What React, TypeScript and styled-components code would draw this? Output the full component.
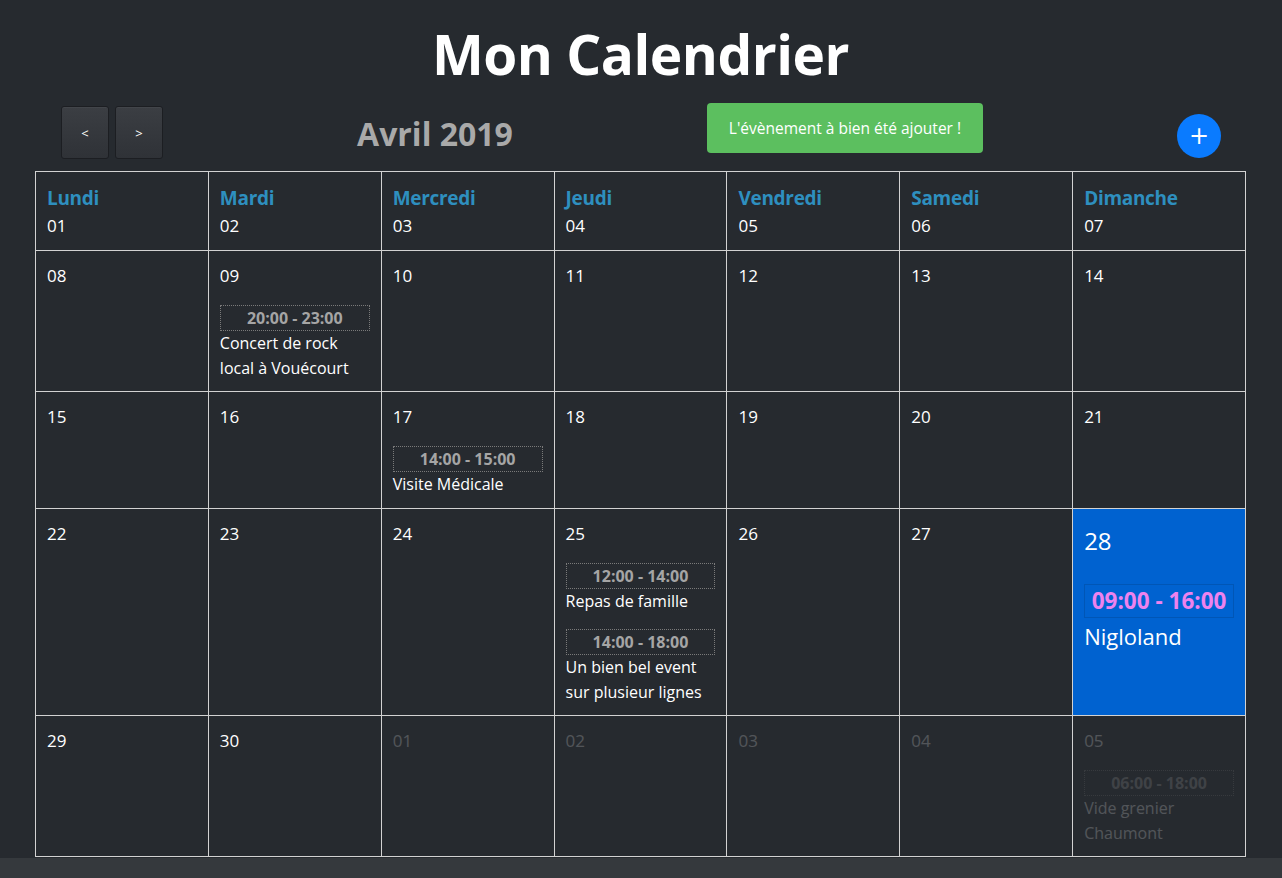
import React from "react";
import styled, { createGlobalStyle } from "styled-components";

const GlobalStyle = createGlobalStyle`
  html, body { margin: 0; padding: 0; }
  body {
    background: #35393d;
    font-family: "Open Sans", "Noto Sans", sans-serif;
    color: #fff;
  }
`;

const Page = styled.div`
  background: #262a2f;
  padding: 20px 36px 1px 35px;
`;

const Title = styled.h1`
  margin: 0 0 16px;
  text-align: center;
  font-size: 55px;
  line-height: 67px;
  font-weight: 700;
  color: #fff;
  letter-spacing: -0.5px;
`;

const Toolbar = styled.div`
  display: flex;
  justify-content: space-between;
  align-items: flex-start;
  padding: 0 25px 0 26px;
  height: 55px;
  margin-bottom: 13px;
`;

const NavGroup = styled.div`
  display: flex;
  gap: 6px;
  margin-top: 3px;
`;

const NavButton = styled.button`
  width: 48px;
  height: 53px;
  border: 1px solid #1c1e22;
  border-radius: 3px;
  background: linear-gradient(#3b3e43, #2f3237);
  color: #fff;
  font-family: "Open Sans", sans-serif;
  font-size: 13px;
  padding: 0;
  box-shadow: inset 0 1px 0 rgba(255, 255, 255, 0.04);
`;

const Month = styled.h2`
  margin: 9px 0 0;
  font-size: 32px;
  line-height: 44px;
  font-weight: 700;
  color: #a9a9a9;
`;

const Alert = styled.div`
  width: 276px;
  height: 50px;
  box-sizing: border-box;
  background: #5cbf5f;
  border-radius: 4px;
  color: #fff;
  font-size: 15.5px;
  display: flex;
  align-items: center;
  justify-content: center;
`;

const AddButton = styled.button`
  margin-top: 11px;
  width: 44px;
  height: 44px;
  border-radius: 50%;
  border: none;
  background: #0a7bff;
  color: #fff;
  font-size: 24px;
  line-height: 1;
  padding: 0;
  display: flex;
  align-items: center;
  justify-content: center;
  font-family: "DejaVu Sans", sans-serif;
`;

const Grid = styled.div`
  display: grid;
  grid-template-columns: repeat(7, 1fr);
  border-top: 1px solid #d2d2d2;
  border-left: 1px solid #d2d2d2;
`;

const Cell = styled.div<{ $today?: boolean; $faded?: boolean }>`
  border-right: 1px solid #d2d2d2;
  border-bottom: 1px solid #d2d2d2;
  padding: 11px 11px 11px;
  background: ${(p) => (p.$today ? "#0062d0" : "transparent")};
  min-width: 0;
  & > * {
    opacity: ${(p) => (p.$faded ? 0.2 : 1)};
  }
`;

const HeadCell = styled(Cell)`
  padding: 12px 11px 10px;
`;

const DayName = styled.div`
  font-size: 19px;
  line-height: 28px;
  font-weight: 700;
  color: #2e8fbf;
  letter-spacing: -0.3px;
`;

const DayNum = styled.div<{ $today?: boolean }>`
  font-size: ${(p) => (p.$today ? "24px" : "17px")};
  line-height: ${(p) => (p.$today ? "42px" : "27px")};
  color: #fff;
`;

const HeadNum = styled(DayNum)`
  line-height: 28px;
`;

const Event = styled.div<{ $today?: boolean }>`
  margin-top: ${(p) => (p.$today ? "22px" : "16px")};
`;

const Time = styled.div<{ $today?: boolean }>`
  box-sizing: border-box;
  border: 1px ${(p) => (p.$today ? "solid rgba(0,0,0,0.12)" : "dotted #7a7a7a")};
  text-align: center;
  font-family: "Open Sans", sans-serif;
  font-weight: 700;
  font-size: ${(p) => (p.$today ? "22.5px" : "16px")};
  line-height: ${(p) => (p.$today ? "32px" : "24px")};
  color: ${(p) => (p.$today ? "violet" : "#a5a5a5")};
`;

const EventTitle = styled.div<{ $today?: boolean }>`
  font-size: ${(p) => (p.$today ? "22px" : "16px")};
  line-height: ${(p) => (p.$today ? "36px" : "24.5px")};
  color: #fff;
`;

type Ev = { time: string; title: string };
type Day = { n: string; events?: Ev[]; today?: boolean; faded?: boolean };

const headers: [string, string][] = [
  ["Lundi", "01"],
  ["Mardi", "02"],
  ["Mercredi", "03"],
  ["Jeudi", "04"],
  ["Vendredi", "05"],
  ["Samedi", "06"],
  ["Dimanche", "07"],
];

const days: Day[] = [
  { n: "08" },
  { n: "09", events: [{ time: "20:00 - 23:00", title: "Concert de rock local à Vouécourt" }] },
  { n: "10" },
  { n: "11" },
  { n: "12" },
  { n: "13" },
  { n: "14" },
  { n: "15" },
  { n: "16" },
  { n: "17", events: [{ time: "14:00 - 15:00", title: "Visite Médicale" }] },
  { n: "18" },
  { n: "19" },
  { n: "20" },
  { n: "21" },
  { n: "22" },
  { n: "23" },
  { n: "24" },
  {
    n: "25",
    events: [
      { time: "12:00 - 14:00", title: "Repas de famille" },
      { time: "14:00 - 18:00", title: "Un bien bel event sur plusieur lignes" },
    ],
  },
  { n: "26" },
  { n: "27" },
  { n: "28", today: true, events: [{ time: "09:00 - 16:00", title: "Nigloland" }] },
  { n: "29" },
  { n: "30" },
  { n: "01", faded: true },
  { n: "02", faded: true },
  { n: "03", faded: true },
  { n: "04", faded: true },
  { n: "05", faded: true, events: [{ time: "06:00 - 18:00", title: "Vide grenier Chaumont" }] },
];

export default function App() {
  return (
    <>
      <GlobalStyle />
      <Page>
        <Title>Mon Calendrier</Title>
        <Toolbar>
          <NavGroup>
            <NavButton>&lt;</NavButton>
            <NavButton>&gt;</NavButton>
          </NavGroup>
          <Month>Avril 2019</Month>
          <Alert>L'évènement à bien été ajouter !</Alert>
          <AddButton>+</AddButton>
        </Toolbar>
        <Grid>
          {headers.map(([name, n]) => (
            <HeadCell key={name}>
              <DayName>{name}</DayName>
              <HeadNum>{n}</HeadNum>
            </HeadCell>
          ))}
          {days.map((d, i) => (
            <Cell key={i} $today={d.today} $faded={d.faded}>
              <DayNum $today={d.today}>{d.n}</DayNum>
              {d.events?.map((e, j) => (
                <Event key={j} $today={d.today}>
                  <Time $today={d.today}>{e.time}</Time>
                  <EventTitle $today={d.today}>{e.title}</EventTitle>
                </Event>
              ))}
            </Cell>
          ))}
        </Grid>
      </Page>
    </>
  );
}
